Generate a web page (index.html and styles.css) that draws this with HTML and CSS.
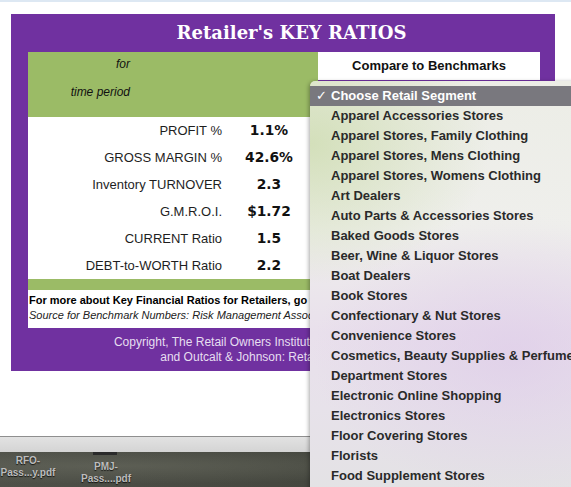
FILE: index.html
```html
<!DOCTYPE html>
<html>
<head>
<meta charset="utf-8">
<link rel="stylesheet" href="styles.css">
</head>
<body>
<div class="topstrip"></div>
<div class="page">
  <div class="ratios">
    <h1 class="title">Retailer's KEY RATIOS</h1>
    <div class="head">
      <div class="period">
        <div class="for">for</div>
        <div class="tp">time period</div>
      </div>
      <div class="bench">
        <div class="bench-box">Compare to Benchmarks</div>
      </div>
    </div>
    <div class="rows">
      <div class="row"><span class="label">PROFIT %</span><span class="val">1.1%</span><span></span></div>
      <div class="row"><span class="label">GROSS MARGIN %</span><span class="val">42.6%</span><span></span></div>
      <div class="row"><span class="label">Inventory TURNOVER</span><span class="val">2.3</span><span></span></div>
      <div class="row"><span class="label">G.M.R.O.I.</span><span class="val">$1.72</span><span></span></div>
      <div class="row"><span class="label">CURRENT Ratio</span><span class="val">1.5</span><span></span></div>
      <div class="row"><span class="label">DEBT-to-WORTH Ratio</span><span class="val">2.2</span><span></span></div>
    </div>
    <div class="band"></div>
    <div class="more">
      <div class="more-b">For more about Key Financial Ratios for Retailers, go to RetailOwner.com</div>
      <div class="more-i">Source for Benchmark Numbers: Risk Management Association (RMA)</div>
    </div>
    <div class="copy">
      <div>Copyright, The Retail Owners Institute® 2005-2015, All Rights &amp;</div>
      <div>and Outcalt &amp; Johnson: Retail Strategists, LLC</div>
    </div>
  </div>
</div>
<div class="statusbar"></div>
<div class="desktop">
  <div class="thumb"></div>
  <div class="dicon dicon-1"><div>RFO-</div><div>Pass...y.pdf</div></div>
  <div class="dicon dicon-2"><div>PMJ-</div><div>Pass....pdf</div></div>
</div>

<div class="menu">
  <div class="menu-head"><span class="check">✓</span>Choose Retail Segment</div>
  <div class="item">Apparel Accessories Stores</div>
  <div class="item">Apparel Stores, Family Clothing</div>
  <div class="item">Apparel Stores, Mens Clothing</div>
  <div class="item">Apparel Stores, Womens Clothing</div>
  <div class="item">Art Dealers</div>
  <div class="item">Auto Parts &amp; Accessories Stores</div>
  <div class="item">Baked Goods Stores</div>
  <div class="item">Beer, Wine &amp; Liquor Stores</div>
  <div class="item">Boat Dealers</div>
  <div class="item">Book Stores</div>
  <div class="item">Confectionary &amp; Nut Stores</div>
  <div class="item">Convenience Stores</div>
  <div class="item">Cosmetics, Beauty Supplies &amp; Perfume Stores</div>
  <div class="item">Department Stores</div>
  <div class="item">Electronic Online Shopping</div>
  <div class="item">Electronics Stores</div>
  <div class="item">Floor Covering Stores</div>
  <div class="item">Florists</div>
  <div class="item">Food Supplement Stores</div>
</div>
</body>
</html>
```

FILE: styles.css
```css
html, body {
  margin: 0;
  padding: 0;
  background: #ffffff;
  overflow: hidden;
  font-family: "Liberation Sans", Arial, sans-serif;
}
body {
  width: 571px;
  height: 487px;
  position: relative;
}
.topstrip {
  height: 2px;
  background: #dde8f3;
}
.page {
  height: 434px;
  background: #ffffff;
  padding: 12px 0 0 11px;
  box-sizing: border-box;
}
.ratios {
  width: 544px;
  height: 357px;
  background: #7031a0;
  padding: 0 15px 0 17px;
  box-sizing: border-box;
}
.title {
  margin: 0;
  height: 38px;
  line-height: 38px;
  padding-left: 15px;
  text-align: center;
  font-family: "DejaVu Serif", "Liberation Serif", serif;
  font-weight: bold;
  font-size: 18px;
  color: #ffffff;
}
.head {
  display: grid;
  grid-template-columns: 290px 222px;
  height: 65px;
}
.period {
  background: #9bbb66;
}
.for, .tp {
  width: 102px;
  text-align: right;
  font-style: italic;
  font-size: 12px;
  line-height: 16px;
  color: #111;
}
.for { margin-top: 4px; padding-right: 2px; }
.tp { margin-top: 12px; }
.bench-box {
  background: #ffffff;
  height: 28px;
  line-height: 27px;
  text-align: center;
  font-weight: bold;
  font-size: 13px;
  color: #111;
}
.rows {
  background: #ffffff;
}
.row {
  display: grid;
  grid-template-columns: 194px 94px 1fr;
  height: 27px;
  line-height: 27px;
  align-items: center;
}
.label {
  text-align: right;
  font-size: 13px;
  color: #1e1e1e;
}
.val {
  text-align: center;
  font-family: "DejaVu Sans", Verdana, sans-serif;
  font-weight: bold;
  font-size: 13.8px;
  color: #111;
}
.band {
  height: 11px;
  background: #9bbb66;
}
.more {
  height: 38px;
  background: #ffffff;
  padding: 3px 0 0 1px;
  box-sizing: border-box;
  white-space: nowrap;
  overflow: hidden;
  font-size: 11px;
  line-height: 15px;
  color: #000;
}
.more-b { font-weight: bold; }
.more-i { font-style: italic; color: #222; }
.copy {
  padding-top: 7px;
  text-align: center;
  white-space: nowrap;
  font-size: 12px;
  line-height: 15px;
  color: #e6def0;
}
.statusbar {
  height: 15px;
  border-top: 1px solid #8f8f8f;
  background: linear-gradient(#e2e2e2, #d4d4d4);
}
.desktop {
  height: 35px;
  position: relative;
  background:
    radial-gradient(ellipse at 20% 40%, rgba(110,112,100,0.5), transparent 60%),
    linear-gradient(90deg, #4e5048, #44463e 60%, #3d3f38);
}
.thumb {
  position: absolute;
  left: 93px;
  top: 0;
  width: 24px;
  height: 3px;
  background: #2a2a2a;
}
.dicon {
  position: absolute;
  width: 70px;
  text-align: center;
  font-weight: bold;
  font-size: 10px;
  line-height: 12px;
  color: #bdbdbd;
  text-shadow: 0 1px 1px rgba(0,0,0,0.8);
}
.dicon-1 { left: -7px; top: 3px; }
.dicon-2 { left: 71px; top: 9px; }

.menu {
  position: absolute;
  left: 310px;
  top: 81px;
  width: 290px;
  height: 420px;
  padding-top: 5px;
  box-sizing: border-box;
  border-radius: 5px 0 0 0;
  box-shadow: -1px 1px 4px rgba(0,0,0,0.35);
  background:
    radial-gradient(ellipse 180px 140px at 0% 15%, rgba(205,220,175,0.8), transparent),
    radial-gradient(ellipse 200px 140px at 70% 65%, rgba(220,200,232,0.6), transparent),
    linear-gradient(180deg, #ecede6 0%, #efefec 35%, #e9e0ec 60%, #e7e2ea 78%, #e3e2e4 100%);
  font-family: "Liberation Sans", Arial, sans-serif;
  font-weight: bold;
  font-size: 13px;
  white-space: nowrap;
}
.menu-head {
  height: 20px;
  line-height: 20px;
  padding-left: 6px;
  background: #79787e;
  color: #ffffff;
}
.check {
  display: inline-block;
  width: 15px;
  font-family: "DejaVu Sans", sans-serif;
}
.item {
  height: 20px;
  line-height: 20px;
  padding-left: 21px;
  color: #2a2a2a;
}
```
